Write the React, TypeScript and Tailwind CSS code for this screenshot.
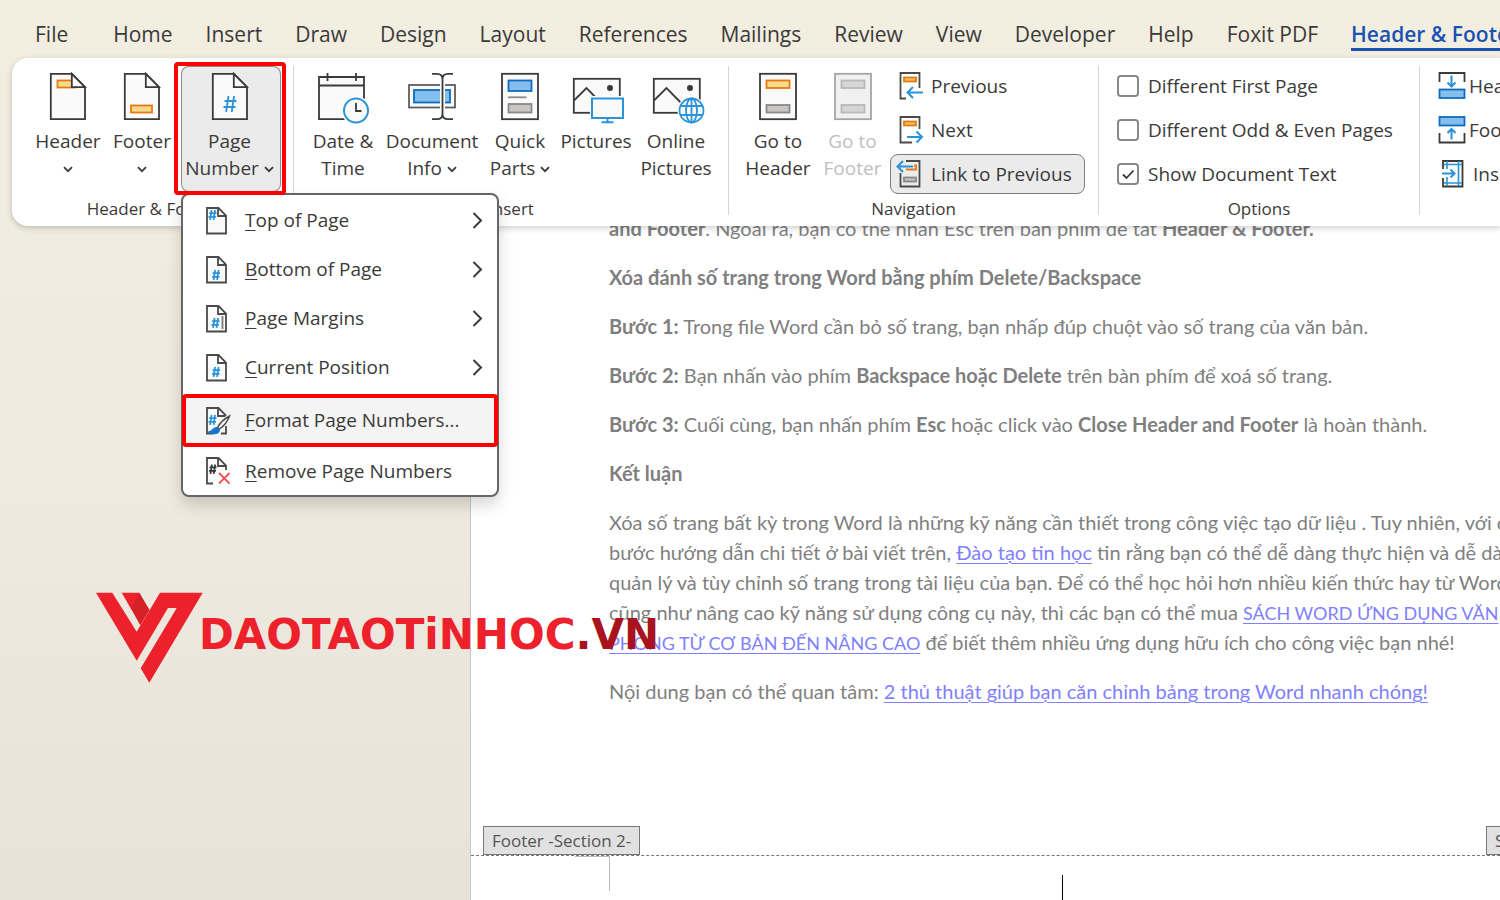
import type { ReactNode } from "react";

const ink = "#3b3a39";
const blue = "#2b93d9";

const tabs = [
  "Home", "Insert", "Draw", "Design", "Layout", "References", "Mailings",
  "Review", "View", "Developer", "Help", "Foxit PDF",
];

function Down() {
  return (
    <svg width="10" height="7" viewBox="0 0 10 7" fill="none" stroke={ink} strokeWidth="1.8" className="inline-block align-middle">
      <path d="M1 1.2l4 4 4-4" />
    </svg>
  );
}

function Hash({ x, y, s = 1, color = blue, w = 1.8 }: { x: number; y: number; s?: number; color?: string; w?: number }) {
  return (
    <path
      transform={`translate(${x} ${y}) scale(${s})`}
      d="M5 0L2.6 16M10.6 0L8.2 16M1 5H13M0 11H12"
      stroke={color}
      strokeWidth={w / s}
      fill="none"
    />
  );
}

function PageIcon({ children }: { children: ReactNode }) {
  return (
    <svg width="38" height="50" viewBox="0 0 38 50" fill="none" stroke={ink} strokeWidth="1.8">
      <path d="M1.8 1.8H23L36 15V47.2H1.8Z" fill="#fafafa" />
      {children}
      <path d="M22.8 1.8V15.2H36Z" fill="#fafafa" />
    </svg>
  );
}

function HeaderIcon() {
  return (
    <PageIcon>
      <rect x="8.5" y="8.5" width="18" height="7" fill="#f9d98c" stroke="#e57a12" />
    </PageIcon>
  );
}

function FooterIcon() {
  return (
    <PageIcon>
      <rect x="8" y="33.5" width="21" height="7" fill="#f9d98c" stroke="#e57a12" />
    </PageIcon>
  );
}

function DateIcon() {
  return (
    <svg width="54" height="52" viewBox="0 0 54 52" fill="none" stroke={ink} strokeWidth="1.8">
      <path d="M3 5H48V47.2H3Z" fill="#fafafa" />
      <path d="M3 13.5H48M11.5 1V9M40 1V9" />
      <circle cx="40" cy="38.5" r="14.5" fill="#fff" stroke="none" />
      <circle cx="40" cy="38.5" r="12" fill="#fafafa" stroke={blue} strokeWidth="2" />
      <path d="M40 31V39H45.5" />
    </svg>
  );
}

function InfoIcon() {
  return (
    <svg width="50" height="50" viewBox="0 0 50 50" fill="none" stroke={ink} strokeWidth="1.8">
      <rect x="2" y="13" width="46" height="22.5" fill="#fafafa" stroke="#605e5c" />
      <rect x="7" y="18" width="36" height="12.5" fill="#83beec" stroke="#0f6cbd" />
      <path d="M35.5 3V47" stroke="#fff" strokeWidth="5" />
      <path d="M25 1.8H30Q35.5 1.8 35.5 7V42Q35.5 47.2 30 47.2H25M46 1.8H41Q35.5 1.8 35.5 7M35.5 42Q35.5 47.2 41 47.2H46" />
    </svg>
  );
}

function PartsIcon() {
  return (
    <svg width="38" height="50" viewBox="0 0 38 50" fill="none" stroke={ink} strokeWidth="1.8">
      <rect x="1" y="1.8" width="36" height="45.4" fill="#fafafa" />
      <rect x="7.5" y="8.5" width="23" height="10.5" fill="#83beec" stroke="#0f6cbd" />
      <path d="M7 25.3H25.5" stroke="#8a8886" />
      <rect x="7.5" y="32" width="23" height="8.5" fill="#c8c6c4" stroke="#8a8886" />
    </svg>
  );
}

function PictureFrame() {
  return (
    <>
      <rect x="1.8" y="6.8" width="46" height="34" fill="#fafafa" />
      <path d="M2 28.5L14.5 16L36 38" />
      <circle cx="38" cy="16" r="3" fill={ink} stroke="none" />
    </>
  );
}

function PicturesIcon() {
  return (
    <svg width="60" height="52" viewBox="-6 0 60 52" fill="none" stroke={ink} strokeWidth="1.8">
      <PictureFrame />
      <path d="M18 24H54V49H18Z" fill="#fff" stroke="none" />
      <path d="M20 26.5H51V46H20Z" fill="#fafafa" stroke={blue} strokeWidth="2" />
      <path d="M35.5 46V50M29.5 50.3H41.5" stroke={blue} strokeWidth="2" />
    </svg>
  );
}

function OnlineIcon() {
  return (
    <svg width="60" height="52" viewBox="-6 0 60 52" fill="none" stroke={ink} strokeWidth="1.8">
      <PictureFrame />
      <circle cx="39.5" cy="38.5" r="14" fill="#fff" stroke="none" />
      <g stroke={blue}>
        <circle cx="39.5" cy="38.5" r="12" fill="#fafafa" />
        <ellipse cx="39.5" cy="38.5" rx="5.5" ry="12" />
        <path d="M39.5 26.5V50.5M28.5 34H50.5M28.5 43H50.5" />
      </g>
    </svg>
  );
}

function GoIcon({ active = false }: { active?: boolean }) {
  return (
    <svg width="38" height="50" viewBox="0 0 38 50" fill="none" strokeWidth="1.8">
      <rect x="1" y="1.8" width="36" height="45.4" fill={active ? "#fafafa" : "#f0f0f0"} stroke={active ? ink : "#a6a6a6"} />
      <rect x="7.5" y="8.5" width="23" height="7.5" fill={active ? "#f9d98c" : "#d6d6d6"} stroke={active ? "#e57a12" : "#b8b8b8"} />
      <rect x="7.5" y="33" width="23" height="7.5" fill={active ? "#c8c6c4" : "#d6d6d6"} stroke={active ? "#8a8886" : "#b8b8b8"} />
    </svg>
  );
}

function PreviousIcon() {
  return (
    <svg width="28" height="30" viewBox="0 0 28 30" fill="none" stroke="#4c4a48" strokeWidth="1.8">
      <path d="M10 27.5H4.5V2H23.5V17" />
      <rect x="8" y="6.5" width="12" height="4" fill="#f4bd6a" stroke="#e57a12" />
      <path d="M27 21.5H12M17 16L11.5 21.5L17 27" stroke={blue} strokeWidth="2" />
    </svg>
  );
}

function NextIcon() {
  return (
    <svg width="28" height="30" viewBox="0 0 28 30" fill="none" stroke="#4c4a48" strokeWidth="1.8">
      <path d="M16 27.5H4.5V2H23.5V14" />
      <rect x="8" y="6.5" width="12" height="4" fill="#f4bd6a" stroke="#e57a12" />
      <path d="M11 22H26M20.5 16.5L26 22L20.5 27.5" stroke={blue} strokeWidth="2" />
    </svg>
  );
}

function LinkIcon() {
  return (
    <svg width="28" height="30" viewBox="0 0 28 30" fill="none" stroke="#4c4a48" strokeWidth="1.8">
      <path d="M10 2H23.5V27.5H4.5V14" fill="none" />
      <path d="M18 6.5H20V10.5H10" stroke="#e57a12" />
      <rect x="8" y="18.5" width="12" height="4" fill="#c8c6c4" stroke="#8a8886" />
      <path d="M17 7.5H1.5M7 2L1.5 7.5L7 13" stroke={blue} strokeWidth="2" />
    </svg>
  );
}

function FromTopIcon() {
  return (
    <svg width="28" height="30" viewBox="0 0 28 30" fill="none" stroke={ink} strokeWidth="1.8">
      <path d="M1.5 11V2H26.5V11" />
      <rect x="1.5" y="18.5" width="25" height="8.5" fill="#83beec" stroke="#0f6cbd" />
      <path d="M13.5 4.5V15M9.5 11.5L13.5 15.5L17.5 11.5" stroke={blue} strokeWidth="2" />
    </svg>
  );
}

function FromBottomIcon() {
  return (
    <svg width="28" height="30" viewBox="0 0 28 30" fill="none" stroke={ink} strokeWidth="1.8">
      <path d="M1.5 18V27.5H26.5V18" />
      <rect x="1.5" y="2" width="25" height="8.5" fill="#83beec" stroke="#0f6cbd" />
      <path d="M13.5 24.5V14M9.5 18L13.5 14L17.5 18" stroke={blue} strokeWidth="2" />
    </svg>
  );
}

function AlignTabIcon() {
  return (
    <svg width="28" height="30" viewBox="0 0 28 30" fill="none" stroke={ink} strokeWidth="1.8">
      <path d="M5 10V2H24.5V27.5H5V19" fill="#fafafa" />
      <path d="M9 2V10M9 18V27M20.5 2V27M6 5.5H24M6 24H24" stroke={blue} strokeWidth="1.6" />
      <path d="M4 14.5H16M12.5 10.5L16.5 14.5L12.5 18.5" stroke={blue} strokeWidth="2" />
    </svg>
  );
}

function MenuPage({ open = false, children }: { open?: boolean; children: ReactNode }) {
  return (
    <svg width="26" height="30" viewBox="0 0 26 30" fill="none" stroke="#4c4a48" strokeWidth="1.8">
      <path d={open ? "M8 27.5H2V2H13.5L21 9.5V14" : "M2 2H13.5L21 9.5V27.5H2Z"} fill="#fafafa" />
      <path d="M13 2V10H21" />
      {children}
    </svg>
  );
}

const menu = [
  { key: "T", rest: "op of Page", sub: true, icon: <MenuPage><Hash x={3.5} y={4} s={0.62} /></MenuPage> },
  { key: "B", rest: "ottom of Page", sub: true, icon: <MenuPage><Hash x={7} y={15} s={0.62} /></MenuPage> },
  {
    key: "P", rest: "age Margins", sub: true,
    icon: <MenuPage><Hash x={6.5} y={14} s={0.62} /><path d="M17.5 12V25" stroke="#7a7876" /></MenuPage>,
  },
  { key: "C", rest: "urrent Position", sub: true, icon: <MenuPage><Hash x={7} y={14} s={0.62} /></MenuPage> },
  {
    key: "F", rest: "ormat Page Numbers...", marked: true,
    icon: (
      <MenuPage open>
        <Hash x={3.5} y={9} s={0.62} />
        <path d="M16 27.5H21V20" />
        <path d="M24.5 10.5L13 22.5" stroke="#f4f4f4" strokeWidth="6" />
        <path d="M24.5 10C19 13 15 17 12.5 21.5L14.5 23C19 20 22.5 15.5 24.5 10Z" fill="#fafafa" strokeWidth="1.5" />
        <path d="M12 21C8 20.500 7.500 25 2.500 25.500C5 29.500 15 29.500 15 23.500Z" fill="#1477c9" stroke="none" />
      </MenuPage>
    ),
  },
  {
    key: "R", rest: "emove Page Numbers", last: true,
    icon: (
      <MenuPage open>
        <Hash x={4} y={8.5} s={0.58} color={ink} />
        <path d="M14 17L24.5 27.5M24.5 17L14 27.5" stroke="#ee5458" />
      </MenuPage>
    ),
  },
];

function PageNumberMenu() {
  return (
    <ul className="absolute top-[127px] left-0 w-[318px] rounded-lg border-2 border-[#666] bg-white pt-px text-left shadow-[0_8px_16px_rgba(0,0,0,0.16)]">
      {menu.map((m) => (
        <li
          key={m.key}
          className={m.marked ? "-mx-px mt-0.5 h-[53px] rounded-sm border-4 border-[#fe0000] bg-[#f4f4f4]" : m.last ? "h-12" : "h-[49px]"}
        >
          <button className={`flex h-full w-full items-center gap-3.5 pr-3.5 text-[19px] ${m.marked ? "pl-[19px]" : "pl-[22px]"}`}>
            {m.icon}
            <span className="flex-1 text-left whitespace-nowrap">
              <span className="underline decoration-1 underline-offset-3">{m.key}</span>
              {m.rest}
            </span>
            {m.sub && (
              <svg width="11" height="18" viewBox="0 0 11 18" fill="none" stroke={ink} strokeWidth="2">
                <path d="M1.5 1L9 8.500L1.5 16" />
              </svg>
            )}
          </button>
        </li>
      ))}
    </ul>
  );
}

function BigButton({ icon, className = "", children }: { icon: ReactNode; className?: string; children: ReactNode }) {
  return (
    <button className={`flex h-[126px] shrink-0 flex-col items-center pt-[6px] text-[19px] leading-[27px] whitespace-nowrap ${className}`}>
      <span className="mb-[6px] flex h-[50px] items-start">{icon}</span>
      {children}
    </button>
  );
}

function SmallButton({ icon, active = false, tight = false, children }: { icon: ReactNode; active?: boolean; tight?: boolean; children: ReactNode }) {
  return (
    <button
      className={`flex h-10 shrink-0 items-center rounded-lg border px-[5px] text-[19px] whitespace-nowrap ${tight ? "gap-[3px]" : "gap-[7px]"} ${
        active ? "border-[#7d7d7d] bg-[#ebebeb]" : "border-transparent"
      }`}
    >
      {icon}
      {children}
    </button>
  );
}

function Group({ label, className, children }: { label: string; className: string; children: ReactNode }) {
  return (
    <section className={`flex h-[149px] shrink-0 flex-col border-r border-[#d6d6d6] ${className}`}>
      <div className="flex h-[126px]">{children}</div>
      <h2 className="pt-1 text-center text-[17px] leading-[26px]">{label}</h2>
    </section>
  );
}

function Option({ label, checked = false }: { label: string; checked?: boolean }) {
  return (
    <label className="flex h-10 shrink-0 items-center gap-[9px] text-[19px] whitespace-nowrap">
      <span className="grid">
        <input
          type="checkbox"
          defaultChecked={checked}
          className="peer col-start-1 row-start-1 size-[22px] appearance-none rounded border-2 border-[#8a8886] bg-white"
        />
        <svg viewBox="0 0 22 22" fill="none" stroke={ink} strokeWidth="1.8" className="pointer-events-none invisible col-start-1 row-start-1 size-[22px] peer-checked:visible">
          <path d="M6 11.5L9.5 15L16.5 7.5" />
        </svg>
      </span>
      {label}
    </label>
  );
}

function Ribbon() {
  return (
    <div className="relative z-10 ml-3 flex h-[168px] rounded-l-2xl bg-white pt-2 shadow-[0_2px_6px_rgba(0,0,0,0.2)]">
      <Group label="Header & Footer" className="w-[282px]">
        <BigButton icon={<HeaderIcon />} className="ml-[19px] w-[74px]">
          <span>Header</span>
          <span><Down /></span>
        </BigButton>
        <BigButton icon={<FooterIcon />} className="w-[74px]">
          <span>Footer</span>
          <span><Down /></span>
        </BigButton>
        <div className="relative ml-[2px]">
          <BigButton icon={<PageIcon><Hash x={12.5} y={24} /></PageIcon>} className="w-[100px] rounded-lg bg-[#ebebeb] pr-[3px] inset-ring inset-ring-[#8a8a8a]">
            <span>Page</span>
            <span>Number <Down /></span>
          </BigButton>
          <PageNumberMenu />
          <div className="pointer-events-none absolute -top-1 -right-[5px] -left-[7px] h-[133px] rounded-sm border-4 border-[#fe0000]" />
        </div>
      </Group>
      <Group label="Insert" className="w-[435px]">
        <BigButton icon={<DateIcon />} className="ml-3 w-[74px]">
          <span>Date &amp;</span>
          <span>Time</span>
        </BigButton>
        <BigButton icon={<InfoIcon />} className="w-[104px]">
          <span>Document</span>
          <span>Info <Down /></span>
        </BigButton>
        <BigButton icon={<PartsIcon />} className="w-[72px]">
          <span>Quick</span>
          <span>Parts <Down /></span>
        </BigButton>
        <BigButton icon={<PicturesIcon />} className="w-20">
          Pictures
        </BigButton>
        <BigButton icon={<OnlineIcon />} className="w-20">
          <span>Online</span>
          <span>Pictures</span>
        </BigButton>
      </Group>
      <Group label="Navigation" className="w-[370px]">
        <BigButton icon={<GoIcon active />} className="ml-3 w-[74px]">
          <span>Go to</span>
          <span>Header</span>
        </BigButton>
        <BigButton icon={<GoIcon />} className="w-[75px] text-[#c0c0c0]">
          <span>Go to</span>
          <span>Footer</span>
        </BigButton>
        <div className="flex w-[195px] flex-col gap-1">
          <SmallButton icon={<PreviousIcon />}>Previous</SmallButton>
          <SmallButton icon={<NextIcon />}>Next</SmallButton>
          <SmallButton icon={<LinkIcon />} active>Link to Previous</SmallButton>
        </div>
      </Group>
      <Group label="Options" className="w-[321px]">
        <div className="flex flex-col gap-1 pl-[18px]">
          <Option label="Different First Page" />
          <Option label="Different Odd & Even Pages" />
          <Option label="Show Document Text" checked />
        </div>
      </Group>
      <Group label="Position" className="w-[420px]">
        <div className="flex flex-col gap-1 pl-3">
          <SmallButton icon={<FromTopIcon />} tight>Header from Top:</SmallButton>
          <SmallButton icon={<FromBottomIcon />} tight>Footer from Bottom:</SmallButton>
          <SmallButton icon={<AlignTabIcon />}>Insert Alignment Tab</SmallButton>
        </div>
      </Group>
    </div>
  );
}

function DocLink({ className = "", children }: { className?: string; children: ReactNode }) {
  return <a href="#" className={`text-[#8080ff] underline decoration-1 underline-offset-3 ${className}`}>{children}</a>;
}

function Document() {
  return (
    <main className="-mt-[13px] ml-[470px] flex flex-1 flex-col border-l border-[#c8c8c8] bg-white">
      <article className="flex flex-col gap-[19px] pl-[138px] font-[Lato,'Open_Sans',sans-serif] text-[20px] leading-[30px] whitespace-nowrap text-[#7f7f7f]">
        <p><b>and Footer</b>. Ngoài ra, bạn có thể nhấn Esc trên bàn phím để tắt <b>Header &amp; Footer.</b></p>
        <h3 className="font-bold">Xóa đánh số trang trong Word bằng phím Delete/Backspace</h3>
        <p><b>Bước 1:</b> Trong file Word cần bỏ số trang, bạn nhấp đúp chuột vào số trang của văn bản.</p>
        <p><b>Bước 2:</b> Bạn nhấn vào phím <b>Backspace hoặc Delete</b> trên bàn phím để xoá số trang.</p>
        <p><b>Bước 3:</b> Cuối cùng, bạn nhấn phím <b>Esc</b> hoặc click vào <b>Close Header and Footer</b> là hoàn thành.</p>
        <h3 className="font-bold">Kết luận</h3>
        <p>
          Xóa số trang bất kỳ trong Word là những kỹ năng cần thiết trong công việc tạo dữ liệu . Tuy nhiên, với các<br />
          bước hướng dẫn chi tiết ở bài viết trên, <DocLink>Đào tạo tin học</DocLink> tin rằng bạn có thể dễ dàng thực hiện và dễ dàng<br />
          quản lý và tùy chỉnh số trang trong tài liệu của bạn. Để có thể học hỏi hơn nhiều kiến thức hay từ Word<br />
          cũng như nâng cao kỹ năng sử dụng công cụ này, thì các bạn có thể mua <DocLink className="text-[18px] leading-[20px]">SÁCH WORD ỨNG DỤNG VĂN<br />
          PHÒNG TỪ CƠ BẢN ĐẾN NÂNG CAO</DocLink> để biết thêm nhiều ứng dụng hữu ích cho công việc bạn nhé!
        </p>
        <p>Nội dung bạn có thể quan tâm: <DocLink>2 thủ thuật giúp bạn căn chỉnh bảng trong Word nhanh chóng!</DocLink></p>
      </article>
      <footer className="mt-[120px]">
        <div className="flex justify-between border-b border-dashed border-[#777] pl-[12px] text-[17px] leading-[27px] whitespace-nowrap text-[#555]">
          <span className="border border-[#777] bg-[#e1e1e1] px-2">Footer -Section 2-</span>
          <span className="w-[14px] border border-r-0 border-[#777] bg-[#e1e1e1] pl-2">Same as Previous</span>
        </div>
        <div className="flex h-[45px]">
          <div className="ml-[104px] h-[35px] w-[35px] border-t border-r border-[#bbb]" />
          <div className="mt-[19px] ml-[452px] w-px bg-black" />
        </div>
      </footer>
    </main>
  );
}

function Watermark() {
  return (
    <div className="pointer-events-none absolute top-[592px] left-[95px] z-10 flex">
      <svg width="108" height="92" viewBox="0 0 108 92" fill="#ed212b">
        <path d="M26.7 .7H44.3L54.3 18L45.3 33Z" />
        <path d="M44.3 .7L54.3 18L45.3 33L36.7 16.3Z" fill="#d62027" />
        <path d="M1 .7H17.3L41.7 39.7L65 .7H107.7L54.3 90.7L45.7 76.3L81.7 16H73L41.7 68.7Z" />
      </svg>
      <span className="mt-[21px] -ml-1 font-['DejaVu_Sans',sans-serif] text-[42px] leading-[44px] font-bold whitespace-nowrap text-[#ed212b]">
        DAOTAOTiNHOC<span className="text-[#a8131d]">.VN</span>
      </span>
    </div>
  );
}

export default function App() {
  return (
    <div className="relative flex min-h-screen flex-col overflow-hidden bg-linear-to-b from-[#f2eee0] via-[#f0eadf] to-[#e7e3d9] font-['Open_Sans','Noto_Sans',sans-serif] text-[#3b3a39]">
      <nav className="flex h-[58px] gap-[33px] pt-[18px] pl-[35px] text-[21px] leading-[32px] whitespace-nowrap">
        <a href="#" className="mr-3">File</a>
        {tabs.map((t) => (
          <a key={t} href="#">{t}</a>
        ))}
        <a href="#" className="h-[33px] border-b-[3px] border-[#1a52b3] font-semibold text-[#1a52b3]">Header &amp; Footer</a>
      </nav>
      <Ribbon />
      <Document />
      <Watermark />
    </div>
  );
}
